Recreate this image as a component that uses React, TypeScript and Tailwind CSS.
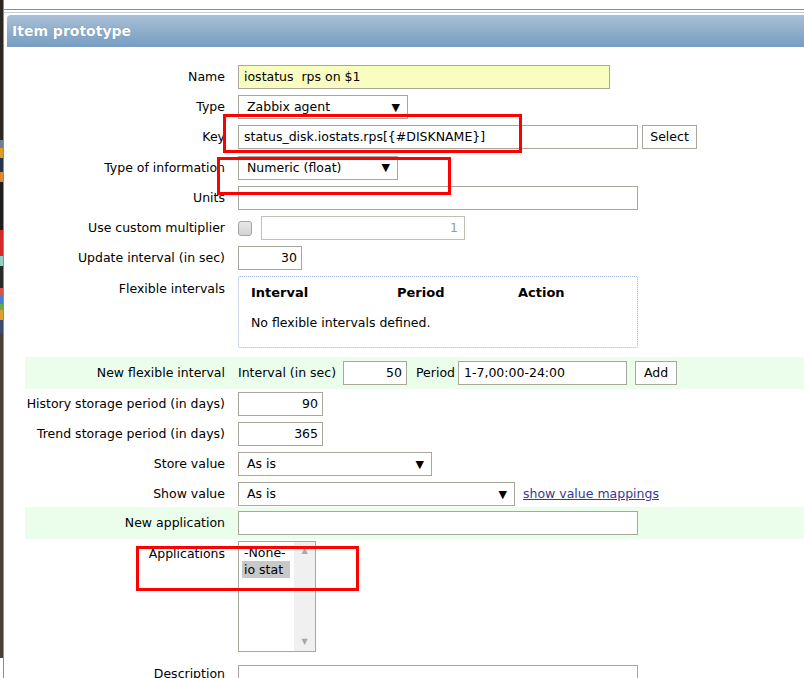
import React from 'react';

// 左侧被截断的窗口条
const stripSegments = [
  { h: 140, c: 'bg-[#2b2620]' },
  { h: 8, c: 'bg-[#6d7f95]' },
  { h: 10, c: 'bg-[#e29a2a]' },
  { h: 14, c: 'bg-[#23364e]' },
  { h: 10, c: 'bg-[#d88c2a]' },
  { h: 48, c: 'bg-[#1e1e1e]' },
  { h: 26, c: 'bg-[#d22a2a]' },
  { h: 10, c: 'bg-[#8fd0c8]' },
  { h: 22, c: 'bg-[#2a2a2a]' },
  { h: 8, c: 'bg-[#d9534f]' },
  { h: 8, c: 'bg-[#4a7fd0]' },
  { h: 6, c: 'bg-[#6aa84f]' },
  { h: 10, c: 'bg-[#e0a030]' },
  { h: 14, c: 'bg-[#3a4a70]' },
  { h: 324, c: 'bg-[#4a4036]' },
];

const font = 'font-["DejaVu_Sans",sans-serif]';

function Arrow() {
  return <span className="text-[11px] leading-none text-black">▼</span>;
}

function Select({ w, text }: { w: string; text: string }) {
  return (
    <div className={`${w} h-[24px] shrink-0 border border-[#a9a69b] bg-white flex items-center justify-between pl-[8px] pr-[7px]`}>
      <span>{text}</span>
      <Arrow />
    </div>
  );
}

function Field({ w, text = '', right = false, className = '' }: { w: string; text?: string; right?: boolean; className?: string }) {
  return (
    <div
      className={`${w} h-[24px] shrink-0 border border-[#a9a69b] flex items-center whitespace-pre ${right ? 'justify-end pr-[4px]' : 'pl-[5px]'} ${className || 'bg-white'}`}
    >
      {text}
    </div>
  );
}

function Button({ w, text }: { w: string; text: string }) {
  return (
    <div className={`${w} h-[24px] shrink-0 border border-[#a9a69b] bg-white flex items-center justify-center`}>{text}</div>
  );
}

function Row({
  label,
  children,
  h = 'h-[30px]',
  green = false,
  top = false,
  labelPad = '',
}: {
  label: string;
  children?: React.ReactNode;
  h?: string;
  green?: boolean;
  top?: boolean;
  labelPad?: string;
}) {
  return (
    <div className={`flex shrink-0 ${h} ${green ? 'bg-[#ebfdeb]' : ''} ${top ? 'items-start' : 'items-center'}`}>
      <div className={`w-[207px] shrink-0 text-right pr-[7px] whitespace-nowrap ${labelPad}`}>{label}</div>
      <div className={`pl-[6px] flex items-center gap-[4px] ${top ? 'pt-[2px]' : ''}`}>{children}</div>
    </div>
  );
}

export default function App() {
  return (
    <div className={`relative w-[804px] h-[678px] overflow-hidden bg-white flex text-[12.5px] leading-[16px] text-black ${font}`}>
      {/* 左侧窗口边 */}
      <div className="w-[3px] flex flex-col shrink-0">
        {stripSegments.map((s, i) => (
          <div key={i} className={`${s.c} shrink-0`} style={{ height: s.h }} />
        ))}
      </div>
      <div className="w-px bg-[#8d8d8d] shrink-0" />

      <div className="flex-1 flex flex-col">
        {/* 顶部栏 */}
        <div className="h-[10px] shrink-0 border-b border-[#7d8fa3]" />
        <div className="mt-[2px] shrink-0 border-t border-[#c4cfdb]" />
        <div className="ml-[3px] mt-[2px] h-[32px] shrink-0 rounded-tl-[4px] bg-gradient-to-b from-[#a9bfd6] to-[#769dc1] flex items-center pl-[5px]">
          <span className='font-bold text-[14px] text-white [text-shadow:0_0_1px_#5a7a9a]'>Item prototype</span>
        </div>

        {/* 表单 */}
        <div className="pl-[21px] pt-[15px] flex flex-col shrink-0">
          <Row label="Name">
            <Field w="w-[372px]" text="iostatus  rps on $1" className="bg-[#fafdc0]" />
          </Row>
          <Row label="Type">
            <Select w="w-[170px]" text="Zabbix agent" />
          </Row>
          <Row label="Key">
            <Field w="w-[400px]" text="status_disk.iostats.rps[{#DISKNAME}]" />
            <Button w="w-[55px]" text="Select" />
          </Row>
          <Row label="Type of information" h="h-[31px]">
            <Select w="w-[160px]" text="Numeric (float)" />
          </Row>
          <Row label="Units">
            <Field w="w-[400px]" />
          </Row>
          <Row label="Use custom multiplier">
            <div className="w-[14px] h-[15px] shrink-0 rounded-[3px] border border-[#a3a3a3] bg-gradient-to-b from-[#e8e8e8] to-[#d2d2d2] mr-[5px]" />
            <div className="w-[204px] h-[24px] shrink-0 border border-[#c2c0b8] bg-white flex items-center justify-end pr-[6px] text-[#9a9a9a]">1</div>
          </Row>
          <Row label="Update interval (in sec)">
            <Field w="w-[64px]" text="30" right />
          </Row>
          <Row label="Flexible intervals" h="h-[77px]" top labelPad="pt-[8px]">
            <div className="mt-[1px] w-[400px] h-[72px] border border-dotted border-[#9fb0d4] rounded-[2px] pl-[12px] pt-[8px]">
              <div className="flex font-bold text-[13px]">
                <span className="w-[146px]">Interval</span>
                <span className="w-[121px]">Period</span>
                <span>Action</span>
              </div>
              <div className="mt-[14px]">No flexible intervals defined.</div>
            </div>
          </Row>

          <div className="h-[7px] shrink-0" />
          <Row label="New flexible interval" h="h-[32px]" green>
            <span className="w-[101px] whitespace-nowrap">Interval (in sec)</span>
            <Field w="w-[64px]" text="50" right />
            <span className="ml-[5px] w-[38px] whitespace-nowrap">Period</span>
            <Field w="w-[169px]" text="1-7,00:00-24:00" />
            <div className="ml-[4px]">
              <Button w="w-[42px]" text="Add" />
            </div>
          </Row>
          <Row label="History storage period (in days)">
            <Field w="w-[85px]" text="90" right />
          </Row>
          <Row label="Trend storage period (in days)">
            <Field w="w-[85px]" text="365" right />
          </Row>
          <Row label="Store value">
            <Select w="w-[194px]" text="As is" />
          </Row>
          <Row label="Show value" h="h-[28px]" top labelPad="pt-[7px]">
            <div className="flex items-center gap-[8px] pt-[1px]">
              <Select w="w-[277px]" text="As is" />
              <span className="text-[#39398f] underline whitespace-nowrap">show value mappings</span>
            </div>
          </Row>
          <Row label="New application" h="h-[32px]" green>
            <Field w="w-[400px]" />
          </Row>
          <Row label="Applications" h="h-[123px]" top labelPad="pt-[7px]">
            <div className="w-[78px] h-[111px] border border-[#a9a69b] bg-white flex">
              <div className="flex-1 pl-[3px] pt-[2px] flex flex-col">
                <span className="pl-[2px] leading-[17px]">-None-</span>
                <span className="pl-[2px] bg-[#c8c8c8] leading-[17px] w-[48px]">io stat</span>
              </div>
              <div className="w-[21px] bg-[#f0f0f0] flex flex-col items-center justify-between py-[5px] text-[#a8a8a8] text-[8px] leading-none">
                <span>▲</span>
                <span>▼</span>
              </div>
            </div>
          </Row>
          <Row label="Description" h="h-[30px]" top labelPad="pt-[4px]">
            <div className="pt-[1px]">
              <div className="w-[400px] h-[40px] border border-[#a9a69b] bg-white" />
            </div>
          </Row>
        </div>
      </div>

      {/* 红色标注框 */}
      <div className="absolute left-[223px] top-[114px] w-[299px] h-[39px] border-[3px] border-[#ff0000]" />
      <div className="absolute left-[217px] top-[157px] w-[234px] h-[38px] border-[3px] border-[#ff0000]" />
      <div className="absolute left-[136px] top-[546px] w-[223px] h-[45px] border-[3px] border-[#ff0000]" />
    </div>
  );
}
